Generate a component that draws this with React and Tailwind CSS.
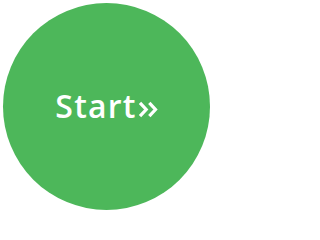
import React from "react";

const DoubleChevron = () => (
  <svg width="21" height="17" viewBox="0 0 21 17" className="ml-[1px] mt-[7px]">
    <path d="M2 1.8 L8.2 8.5 L2 15.2" fill="none" stroke="white" strokeWidth="3.2" />
    <path d="M11.3 1.8 L17.5 8.5 L11.3 15.2" fill="none" stroke="white" strokeWidth="3.2" />
  </svg>
);

const App = () => {
  return (
    <div className="w-[213px] h-[213px] bg-white flex items-center justify-center">
      <div className="w-[207px] h-[207px] rounded-full bg-[#4db75a] flex items-center justify-center">
        <div className="flex items-center text-white font-semibold text-[32px] leading-none font-['Open_Sans',sans-serif] mb-[2px] ml-[1px]">
          <span className="tracking-[1.2px]">Start</span>
          <DoubleChevron />
        </div>
      </div>
    </div>
  );
};

export default App;
